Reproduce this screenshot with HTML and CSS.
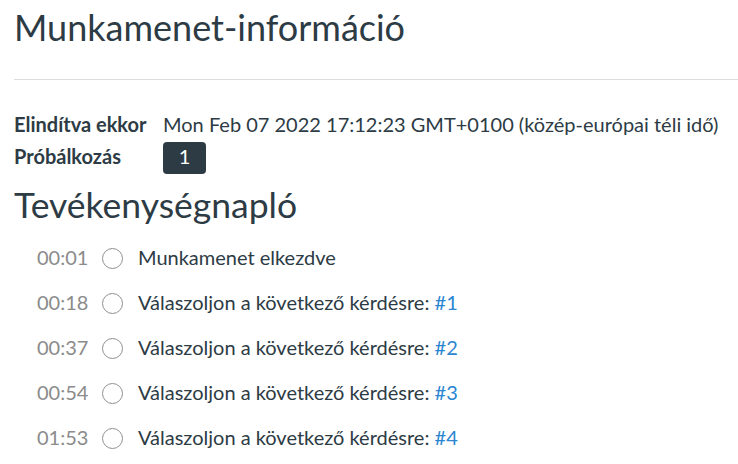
FILE: index.html
```html
<!DOCTYPE html>
<html lang="hu">
  <head>
    <meta charset="utf-8" />
    <meta name="viewport" content="width=device-width, initial-scale=1.0" />
    <title>Munkamenet-információ</title>
    <link rel="stylesheet" href="styles.css">
  </head>

  <body>
    <div class="page">
      <h1 class="title">Munkamenet-információ</h1>
      <hr class="divider" />

      <div class="info">
        <div class="info-row">
          <span class="info-label">Elindítva ekkor</span>
          <span class="info-value">Mon Feb 07 2022 17:12:23 GMT+0100 (közép-európai téli idő)</span>
        </div>
        <div class="info-row">
          <span class="info-label">Próbálkozás</span>
          <span class="badge">1</span>
        </div>
      </div>

      <h2 class="log-title">Tevékenységnapló</h2>
      <ul class="log">
        <li class="log-item">
          <span class="log-time">00:01</span>
          <span class="log-dot"></span>
          <span class="log-text">Munkamenet elkezdve</span>
        </li>
        <li class="log-item">
          <span class="log-time">00:18</span>
          <span class="log-dot"></span>
          <span class="log-text">Válaszoljon a következő kérdésre: <a href="#">#1</a></span>
        </li>
        <li class="log-item">
          <span class="log-time">00:37</span>
          <span class="log-dot"></span>
          <span class="log-text">Válaszoljon a következő kérdésre: <a href="#">#2</a></span>
        </li>
        <li class="log-item">
          <span class="log-time">00:54</span>
          <span class="log-dot"></span>
          <span class="log-text">Válaszoljon a következő kérdésre: <a href="#">#3</a></span>
        </li>
        <li class="log-item">
          <span class="log-time">01:53</span>
          <span class="log-dot"></span>
          <span class="log-text">Válaszoljon a következő kérdésre: <a href="#">#4</a></span>
        </li>
      </ul>
    </div>
  </body>
</html>
```

FILE: styles.css
```css
* {
  padding: 0;
  margin: 0;
  box-sizing: border-box;
  font-family: Lato, "Noto Sans", sans-serif;
}

body {
  background-color: #ffffff;
  color: #2d3b45;
  font-size: 20px;
}

.page {
  padding-left: 14px;
}

.title {
  font-size: 36px;
  font-weight: normal;
  line-height: 1.2;
  margin-top: 6px;
}

.divider {
  border: none;
  border-top: 1px solid #dcdcdc;
  margin-top: 30px;
}

/* Session info */
.info {
  margin-top: 30px;
  display: flex;
  flex-direction: column;
  gap: 4px;
}

.info-row {
  display: flex;
  align-items: baseline;
  line-height: 1.4;
}

.info-label {
  font-weight: bold;
  width: 149px;
}

.badge {
  display: inline-block;
  height: 32px;
  min-width: 43px;
  padding: 0 14px 4px;
  line-height: 28px;
  text-align: center;
  background-color: #2d3b45;
  color: #ffffff;
  border-radius: 4px;
}

/* Activity log */
.log-title {
  font-size: 35.5px;
  font-weight: normal;
  line-height: 1.2;
  margin-top: 10px;
}

.log {
  list-style: none;
  margin-top: 8px;
}

.log-item {
  display: flex;
  align-items: center;
  height: 45px;
  line-height: 1.4;
}

.log-time {
  width: 51px;
  margin-left: 23px;
  margin-right: 14px;
  color: #8b8b8b;
}

.log-dot {
  width: 21px;
  height: 21px;
  margin-top: 3px;
  margin-right: 15px;
  border: 1.5px solid #8f8f8f;
  border-radius: 50%;
}

.log-text a {
  color: #2a86d1;
  text-decoration: none;
}
```
